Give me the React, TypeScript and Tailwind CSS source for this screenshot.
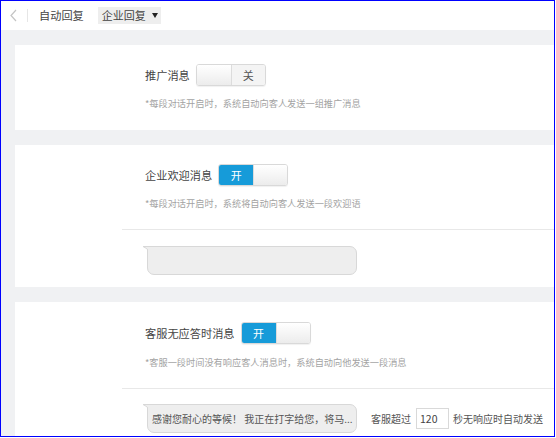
import React from 'react';

const font = { fontFamily: '"Noto Sans CJK SC", "Noto Sans", sans-serif' };

const Toggle = ({ on }: { on: boolean }) => (
  <div className="flex h-[22px] w-[70px] rounded-[3px] border border-[#d9d9d9] overflow-hidden shadow-[0_1px_1px_rgba(0,0,0,0.06)]">
    {on ? (
      <>
        <div className="w-1/2 bg-[#169bd9] text-white text-[11px] flex items-center justify-center">开</div>
        <div className="w-1/2 bg-gradient-to-b from-white to-[#ececec] border-l border-[#dcdcdc]" />
      </>
    ) : (
      <>
        <div className="w-1/2 bg-gradient-to-b from-white to-[#ececec]" />
        <div className="w-1/2 bg-[#f4f4f4] border-l border-[#dcdcdc] text-[#555] text-[11px] flex items-center justify-center">关</div>
      </>
    )}
  </div>
);

const Bubble = ({ children }: { children?: React.ReactNode }) => (
  <div className="relative ml-[132px] w-[210px] h-[29px] bg-[#eeeeee] border border-[#d8d8d8] rounded-[7px] rounded-tl-none flex items-center pl-[4px] text-[10px] text-[#555] whitespace-nowrap">
    <svg className="absolute -left-[5px] -top-px" width="6" height="6" viewBox="0 0 6 6">
      <path d="M0 0.5 L6 0.5 L6 6 Q4.5 2 0 0.5 Z" fill="#eeeeee" stroke="#d8d8d8" strokeWidth="1" />
      <rect x="5" y="1" width="1.5" height="5" fill="#eeeeee" />
    </svg>
    {children}
  </div>
);

export default function App() {
  return (
    <div style={font} className="w-[555px] h-[437px] border border-[#0000ff] overflow-hidden bg-[#f0f1f3] flex flex-col">
      {/* header */}
      <div className="h-[29px] bg-white flex items-center shrink-0">
        <svg className="ml-[8px]" width="9" height="13" viewBox="0 0 9 13">
          <polyline points="7,1 2,6.5 7,12" fill="none" stroke="#c4c4c4" strokeWidth="1.2" />
        </svg>
        <div className="ml-[9px] w-px h-[13px] bg-[#e6e6e6]" />
        <span className="ml-[11px] text-[11.2px] text-[#444]">自动回复</span>
        <div className="ml-[14px] h-[17px] w-[63px] bg-[#eeeeee] flex items-center pl-[4px] text-[11px] text-[#444]">
          企业回复
          <svg className="ml-[6px]" width="6" height="5" viewBox="0 0 6 5">
            <path d="M0 0 L6 0 L3 5 Z" fill="#222" />
          </svg>
        </div>
      </div>

      <div className="flex-1 pl-[14px] pt-[15px] flex flex-col gap-[15px]">
        {/* card 1 */}
        <div className="bg-white h-[85px] pt-[19px] pl-[130px]">
          <div className="flex items-center gap-[6px]">
            <span className="text-[11.2px] text-[#444]">推广消息</span>
            <Toggle on={false} />
          </div>
          <div className="mt-[11px] text-[9.2px] leading-[12px] text-[#a3a3a3]">*每段对话开启时，系统自动向客人发送一组推广消息</div>
        </div>

        {/* card 2 */}
        <div className="bg-white h-[142px] pt-[19px]">
          <div className="pl-[130px]">
            <div className="flex items-center gap-[6px]">
              <span className="text-[11.2px] text-[#444]">企业欢迎消息</span>
              <Toggle on />
            </div>
            <div className="mt-[11px] text-[9.2px] leading-[12px] text-[#a3a3a3]">*每段对话开启时，系统将自动向客人发送一段欢迎语</div>
          </div>
          <div className="ml-[107px] mt-[20px] h-px bg-[#e8e8e8]" />
          <div className="mt-[16px]">
            <Bubble />
          </div>
        </div>

        {/* card 3 */}
        <div className="bg-white flex-1 pt-[20px]">
          <div className="pl-[130px]">
            <div className="flex items-center gap-[6px]">
              <span className="text-[11.2px] text-[#444]">客服无应答时消息</span>
              <Toggle on />
            </div>
            <div className="mt-[12px] text-[9.2px] leading-[12px] text-[#a3a3a3]">*客服一段时间没有响应客人消息时，系统自动向他发送一段消息</div>
          </div>
          <div className="ml-[107px] mt-[20px] h-px bg-[#e8e8e8]" />
          <div className="mt-[15px] flex items-center">
            <Bubble>感谢您耐心的等候！ 我正在打字给您，将马...</Bubble>
            <span className="ml-[14px] text-[10px] text-[#555]">客服超过</span>
            <div className="ml-[5px] w-[33px] h-[21px] border border-[#d9d9d9] text-[10.5px] text-[#444] flex items-center pl-[3px]">120</div>
            <span className="ml-[4px] text-[10px] text-[#555] whitespace-nowrap">秒无响应时自动发送</span>
          </div>
        </div>
      </div>
    </div>
  );
}
